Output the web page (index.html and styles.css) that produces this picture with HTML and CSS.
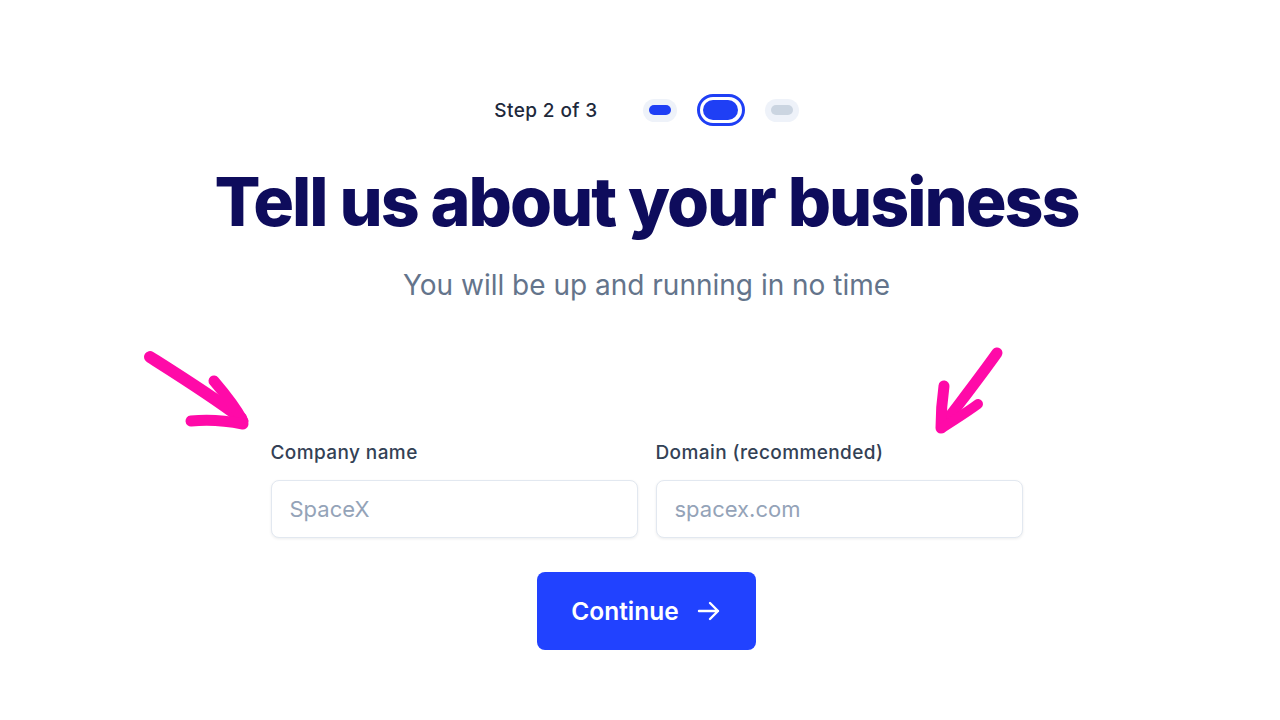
FILE: index.html
```html
<!DOCTYPE html>
<html lang="en">
  <head>
    <meta charset="UTF-8" />
    <meta name="viewport" content="width=device-width, initial-scale=1.0" />
    <title>Tell us about your business</title>
    <link rel="stylesheet" href="styles.css">
  </head>
  <body>
    <div class="onboarding">
      <div class="steps">
        <span class="steps_label">Step 2 of 3</span>
        <div class="steps_dots">
          <span class="dot dot_done"><span></span></span>
          <span class="dot dot_current"><span></span></span>
          <span class="dot dot_next"><span></span></span>
        </div>
      </div>

      <h1 class="title">Tell us about your business</h1>
      <p class="subtitle">You will be up and running in no time</p>

      <div class="form_row">
        <div class="field">
          <label for="company">Company name</label>
          <input type="text" id="company" placeholder="SpaceX" />
        </div>
        <div class="field">
          <label for="domain">Domain (recommended)</label>
          <input type="text" id="domain" placeholder="spacex.com" />
        </div>
      </div>

      <button class="btn_continue">
        Continue
        <svg width="24" height="24" viewBox="0 0 24 24" fill="none" stroke="currentColor" stroke-width="2.4" stroke-linecap="round" stroke-linejoin="round">
          <path d="M2 12h19M13 4l8 8-8 8" />
        </svg>
      </button>
    </div>

    <!-- hand drawn arrows pointing at the fields -->
    <svg class="marks" width="1280" height="720" viewBox="0 0 1280 720" fill="none" stroke="#ff0aa8" stroke-linecap="round" stroke-linejoin="round">
      <path stroke-width="12" d="M150 357 C180 376 212 396 241 418" />
      <path stroke-width="11" d="M214 381 C226 395 236 408 243 421" />
      <path stroke-width="11" d="M191 421 C210 419 228 421 243 424" />
      <path stroke-width="11" d="M997 353 C980 377 962 400 944 424" />
      <path stroke-width="11" d="M944 386 C942 400 941 414 941 428" />
      <path stroke-width="10" d="M978 404 C966 413 954 420 942 428" />
    </svg>
  </body>
</html>
```

FILE: styles.css
```css
* {
  box-sizing: border-box;
  padding: 0;
  margin: 0;
}
body {
  font-family: Inter, "Noto Sans", sans-serif;
  background: #fff;
  position: relative;
  width: 1280px;
  height: 720px;
  overflow: hidden;
}
.onboarding {
  display: flex;
  flex-direction: column;
  align-items: center;
  padding-top: 94px;
  padding-left: 13px;
}
.steps {
  display: flex;
  align-items: center;
  height: 32px;
}
.steps_label {
  font-size: 19px;
  font-weight: 500;
  letter-spacing: 0.4px;
  color: #1e293b;
}
.steps_dots {
  display: flex;
  align-items: center;
  gap: 20px;
  margin-left: 45px;
}
.dot {
  display: flex;
  align-items: center;
  justify-content: center;
  border-radius: 999px;
}
.dot_done,
.dot_next {
  width: 34px;
  height: 23px;
  background: #eef2f9;
}
.dot_done span,
.dot_next span {
  width: 22px;
  height: 10px;
  border-radius: 999px;
  background: #1f3ff5;
}
.dot_next span {
  background: #cbd5e1;
}
.dot_current {
  width: 48px;
  height: 32px;
  border: 3px solid #1f3ff5;
  background: #fff;
}
.dot_current span {
  width: 35px;
  height: 20px;
  border-radius: 999px;
  background: #1f3ff5;
}
.title {
  margin-top: 34px;
  font-size: 68px;
  line-height: 82px;
  font-weight: 800;
  letter-spacing: -2px;
  color: #0e0c5c;
}
.subtitle {
  margin-top: 26px;
  font-size: 28px;
  line-height: 34px;
  color: #64748b;
}
.form_row {
  display: flex;
  gap: 18px;
  margin-top: 140px;
}
.field {
  width: 367px;
}
.field label {
  display: block;
  font-size: 19px;
  line-height: 22px;
  font-weight: 500;
  letter-spacing: 0.4px;
  color: #334155;
}
.field input {
  display: block;
  width: 100%;
  height: 58px;
  margin-top: 16px;
  padding: 0 18px;
  border: 1px solid #e2e8f0;
  border-radius: 8px;
  box-shadow: 0 1px 3px rgba(15, 23, 42, 0.08);
  font-family: inherit;
  font-size: 22px;
  color: #0f172a;
  outline: none;
}
.field input::placeholder {
  color: #94a3b8;
}
.btn_continue {
  display: flex;
  align-items: center;
  gap: 18px;
  height: 78px;
  margin-top: 34px;
  padding: 0 35px 0 34px;
  border: none;
  border-radius: 8px;
  background: #2142ff;
  color: #fff;
  font-family: inherit;
  font-size: 24.5px;
  font-weight: 600;
}
.marks {
  position: absolute;
  left: 0;
  top: 0;
  pointer-events: none;
}
```
